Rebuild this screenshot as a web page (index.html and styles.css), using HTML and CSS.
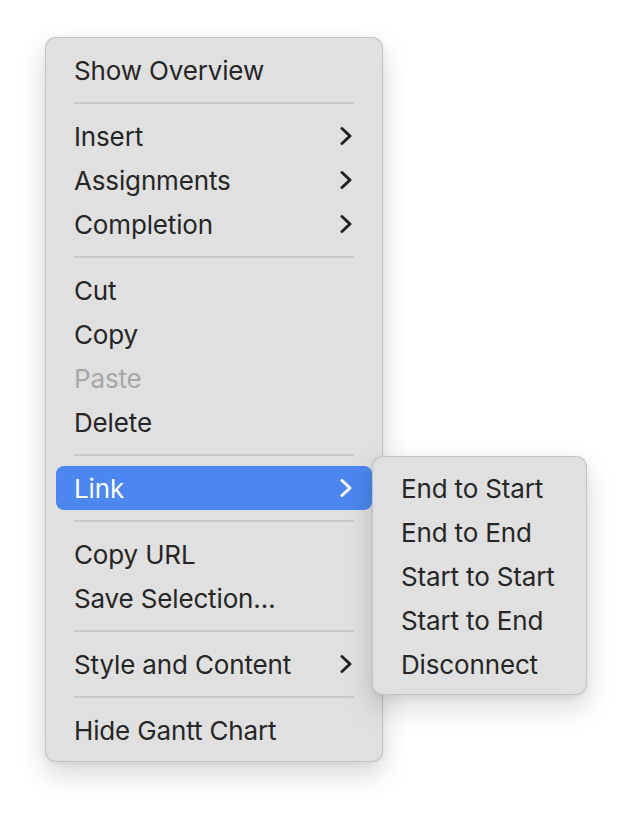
FILE: index.html
```html
<!DOCTYPE html>
<html lang="en">
<head>
<meta charset="utf-8">
<title>Context Menu</title>
<link rel="stylesheet" href="styles.css">
</head>
<body>
<div class="stage">
  <div class="menu">
    <div class="item">Show Overview</div>
    <div class="sep"></div>
    <div class="item">Insert<svg class="chev" viewBox="0 0 12 20"><polyline points="2,2.5 10,10 2,17.5"/></svg></div>
    <div class="item">Assignments<svg class="chev" viewBox="0 0 12 20"><polyline points="2,2.5 10,10 2,17.5"/></svg></div>
    <div class="item">Completion<svg class="chev" viewBox="0 0 12 20"><polyline points="2,2.5 10,10 2,17.5"/></svg></div>
    <div class="sep"></div>
    <div class="item">Cut</div>
    <div class="item">Copy</div>
    <div class="item disabled">Paste</div>
    <div class="item">Delete</div>
    <div class="sep"></div>
    <div class="item active">Link<svg class="chev" viewBox="0 0 12 20"><polyline points="2,2.5 10,10 2,17.5"/></svg>
      <div class="menu submenu">
        <div class="item">End to Start</div>
        <div class="item">End to End</div>
        <div class="item">Start to Start</div>
        <div class="item">Start to End</div>
        <div class="item">Disconnect</div>
      </div>
    </div>
    <div class="sep"></div>
    <div class="item">Copy URL</div>
    <div class="item">Save Selection…</div>
    <div class="sep"></div>
    <div class="item">Style and Content<svg class="chev" viewBox="0 0 12 20"><polyline points="2,2.5 10,10 2,17.5"/></svg></div>
    <div class="sep"></div>
    <div class="item">Hide Gantt Chart</div>
  </div>
</div>
</body>
</html>
```

FILE: styles.css
```css
html, body {
  margin: 0;
  padding: 0;
  background: #ffffff;
}

body {
  font-family: Inter, "Noto Sans", "Liberation Sans", sans-serif;
  color: #262626;
}

.stage {
  box-sizing: border-box;
  min-height: 816px;
  padding: 37px 0 0 45px;
}

.menu {
  box-sizing: border-box;
  width: 338px;
  padding: 10px 10px 9px;
  background: #e0e0e0;
  border: 1px solid rgba(0, 0, 0, 0.13);
  border-radius: 11px;
  box-shadow: 0 12px 28px rgba(0, 0, 0, 0.16), 0 2px 6px rgba(0, 0, 0, 0.06);
}

.item {
  position: relative;
  display: flex;
  align-items: center;
  justify-content: space-between;
  height: 44px;
  padding: 0 20px 0 18px;
  border-radius: 8px;
  font-size: 26px;
  letter-spacing: -0.15px;
  white-space: nowrap;
}

.item.disabled {
  color: #a7a7a7;
}

.item.active {
  background: #4b87ee;
  color: #ffffff;
}

.chev {
  width: 12px;
  height: 20px;
  fill: none;
  stroke: #222222;
  stroke-width: 3;
  stroke-linecap: round;
  stroke-linejoin: round;
}

.item.active .chev {
  stroke: #ffffff;
}

.sep {
  height: 2px;
  margin: 10px 18px;
  background: #c9c9c9;
}

.submenu {
  position: absolute;
  left: 100%;
  top: -10px;
  width: 215px;
  padding: 9px 10px 8px;
  color: #262626;
  z-index: 2;
}
```
